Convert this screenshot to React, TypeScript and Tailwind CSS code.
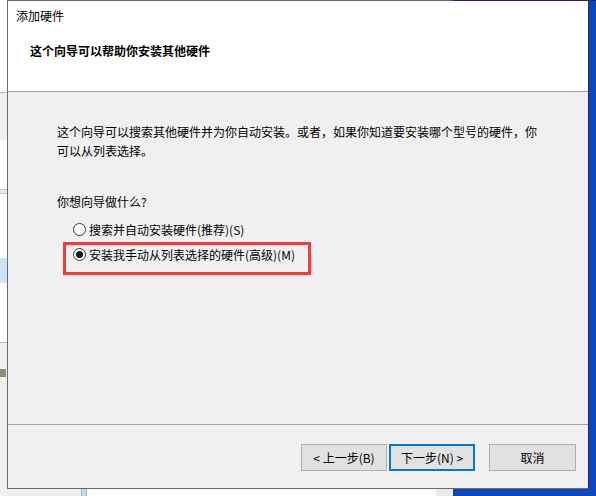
import React from "react";

const font = { fontFamily: '"Microsoft YaHei UI", "Noto Sans CJK SC", "Noto Sans", sans-serif' };

function Radio({ checked, label }: { checked?: boolean; label: string }) {
  return (
    <div className="flex items-center h-[19px]">
      <span className="w-[13px] h-[13px] rounded-full border border-[#333333] bg-white flex items-center justify-center">
        {checked && <span className="w-[7px] h-[7px] rounded-full bg-[#1a1a1a]" />}
      </span>
      <span className="ml-[3px]">{label}</span>
    </div>
  );
}

function LeftStrip() {
  return (
    <div className="w-[7px] flex flex-col shrink-0">
      <div className="h-[92px] bg-white" />
      <div className="h-px bg-[#b4b4b4]" />
      <div className="h-[47px] bg-[#f0f0f0]" />
      <div className="h-[49px] bg-white" />
      <div className="h-px bg-[#c8c8c8]" />
      <div className="h-[3px] bg-[#ece9e8]" />
      <div className="h-px bg-[#a9c8ea]" />
      <div className="h-[64px] bg-white" />
      <div className="h-[25px] bg-[#cfe1f5]" />
      <div className="h-[59px] bg-white" />
      <div className="h-px bg-[#b8b8b8]" />
      <div className="flex-1 bg-[#f0f0f0] flex flex-col">
        <div className="h-[26px]" />
        <div className="h-[8px] w-[6px] bg-[#6b6046] opacity-70" />
      </div>
    </div>
  );
}

export default function App() {
  return (
    <div className="w-[596px] h-[496px] flex flex-col overflow-hidden bg-white text-[12px] text-black" style={font}>
      <div className="flex h-[489px]">
        <LeftStrip />
        <div className="w-[582px] flex flex-col border-l border-r border-b border-l-[#6a6a6a] border-r-[#1b2b5a] border-b-[#6a6a6a] shrink-0">
          <div className="flex h-px shrink-0">
            <div className="w-[445px] bg-[#6a6a6a]" />
            <div className="flex-1 bg-[#1b2b5a]" />
          </div>
          {/* header */}
          <div className="h-[91px] bg-white border-b border-[#a0a0a0] shrink-0 pl-[8px] leading-[16px]">
            <div className="pt-[7px]">添加硬件</div>
            <div className="mt-[19px] pl-[14px] font-bold">这个向导可以帮助你安装其他硬件</div>
          </div>
          {/* body */}
          <div className="h-[333px] bg-[#f0f0f0] border-b border-[#a0a0a0] shrink-0 pl-[49px] pt-[30px] relative">
            <div className="leading-[19px]">
              <div>这个向导可以搜索其他硬件并为你自动安装。或者，如果你知道要安装哪个型号的硬件，你</div>
              <div>可以从列表选择。</div>
            </div>
            <div className="mt-[32px] leading-[19px]">你想向导做什么?</div>
            <div className="mt-[9px] pl-[16px] flex flex-col gap-[6px]">
              <Radio label="搜索并自动安装硬件(推荐)(S)" />
              <Radio checked label="安装我手动从列表选择的硬件(高级)(M)" />
            </div>
            <div className="absolute left-[55px] top-[150px] w-[248px] h-[33px] border-[3px] border-[#f23b3b]" />
          </div>
          {/* footer */}
          <div className="flex-1 bg-[#f0f0f0] flex items-start justify-end pt-[19px] pr-[12px]">
            <button className="w-[86px] h-[27px] bg-[#e1e1e1] border border-[#adadad] leading-none">
              &lt; 上一步(B)
            </button>
            <button className="ml-[2px] w-[86px] h-[27px] bg-[#e1e1e1] border-2 border-[#0078d7] leading-none">
              下一步(N) &gt;
            </button>
            <button className="ml-[14px] w-[87px] h-[27px] bg-[#e1e1e1] border border-[#adadad] leading-none">
              取消
            </button>
          </div>
        </div>
        <div className="flex-1 bg-[#0b47bf] border-t border-[#1b2b5a]" />
      </div>
      <div className="flex h-[7px]">
        <div className="w-[81px] bg-[#f0f0f0]" />
        <div className="w-[6px] bg-[#c3d9f2] border-x border-[#8fb3dc]" />
        <div className="w-[349px] bg-white" />
        <div className="w-[17px] bg-[#ebebeb]" />
        <div className="flex-1 bg-[#0b47bf]" />
      </div>
    </div>
  );
}
